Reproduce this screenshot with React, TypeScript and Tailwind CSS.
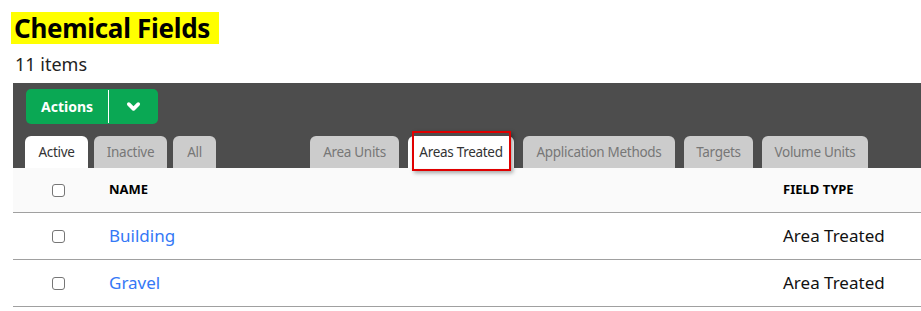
import { ChevronDown } from 'lucide-react';

const leftTabs = [
    { label: 'Active', w: 'w-[63px]' },
    { label: 'Inactive', w: 'w-[73px]' },
    { label: 'All', w: 'w-[43px]' },
];
const rightTabs = [
    { label: 'Area Units', w: 'w-[89px]' },
    { label: 'Areas Treated', w: 'w-[106px]' },
    { label: 'Application Methods', w: 'w-[152px]' },
    { label: 'Targets', w: 'w-[69px]' },
    { label: 'Volume Units', w: 'w-[106px]' },
];

const rows = [
    { name: 'Building', type: 'Area Treated' },
    { name: 'Gravel', type: 'Area Treated' },
];

const Checkbox = () => (
    <span className="block w-[13px] h-[13px] border border-[#767676] rounded-[3px] bg-white" />
);

const Tab = ({ label, w, active }: { label: string; w: string; active?: boolean }) => (
    <div
        className={`${w} h-[32px] flex items-center justify-center rounded-t-[6px] text-[13.5px] tracking-[-0.3px] ${
            active ? 'bg-white text-[#333]' : 'bg-[#cccccc] text-[#777]'
        }`}
    >
        {label}
    </div>
);

export default function App() {
    return (
        <div className="w-[921px] h-[311px] bg-white overflow-hidden" style={{ fontFamily: '"Noto Sans", "Open Sans", sans-serif' }}>
            {/* Title */}
            <div className="pt-[12px] pl-[11px]">
                <h1 className="inline-block bg-[#ffff00] h-[32px] w-[208px] pl-[3px] text-[26px] font-bold leading-[32px] text-black tracking-[-0.3px]">
                    Chemical Fields
                </h1>
            </div>
            <div className="pl-[15px] mt-[9px] text-[18px] leading-[22px] text-[#222]">11 items</div>

            {/* Toolbar */}
            <div className="ml-[13px] mt-[8px] bg-[#4d4d4d] h-[85px] pt-[6px]">
                <div className="ml-[13px] flex w-[132px] h-[35px] bg-[#0aa854] rounded-[5px] text-white">
                    <div className="w-[82px] flex items-center justify-center text-[14px] font-bold">Actions</div>
                    <div className="w-px bg-white my-[1px]" />
                    <div className="flex-1 flex items-center justify-center">
                        <ChevronDown size={19} strokeWidth={4.5} />
                    </div>
                </div>
                <div className="flex mt-[12px] pl-[12px]">
                    <div className="flex gap-[6px]">
                        {leftTabs.map((t, i) => (
                            <Tab key={t.label} label={t.label} w={t.w} active={i === 0} />
                        ))}
                    </div>
                    <div className="flex gap-[9px] ml-[94px]">
                        {rightTabs.map(t => (
                            <div key={t.label} className="relative">
                                <Tab label={t.label} w={t.w} active={t.label === 'Areas Treated'} />
                                {t.label === 'Areas Treated' && (
                                    <div className="absolute left-[4px] right-[3px] top-[-5px] h-[40px] border-2 border-[#e00000] shadow-[2px_2px_4px_rgba(0,0,0,0.35)]" />
                                )}
                            </div>
                        ))}
                    </div>
                </div>
            </div>

            {/* Table */}
            <div className="ml-[13px]">
                <div className="flex items-center h-[45px] bg-[#fafafa] border-b border-[#a0a0a0] text-[13px] font-bold text-black">
                    <div className="w-[96px] pl-[39px]"><Checkbox /></div>
                    <div className="flex-1">NAME</div>
                    <div className="w-[138px]">FIELD TYPE</div>
                </div>
                {rows.map(r => (
                    <div key={r.name} className="flex items-center h-[47px] border-b border-[#a0a0a0] text-[17px]">
                        <div className="w-[96px] pl-[39px]"><Checkbox /></div>
                        <div className="flex-1 text-[#3478f6]">{r.name}</div>
                        <div className="w-[138px] text-[#111]">{r.type}</div>
                    </div>
                ))}
            </div>
        </div>
    );
}
